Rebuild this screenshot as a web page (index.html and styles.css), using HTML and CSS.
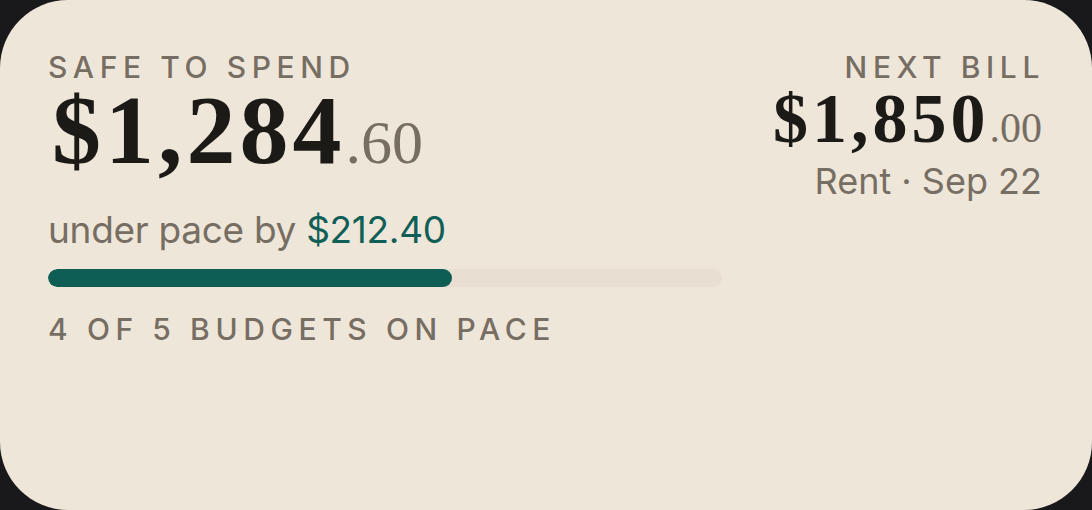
FILE: index.html
```html
<!DOCTYPE html>
<html lang="en">
<head>
    <meta charset="UTF-8">
    <meta name="viewport" content="width=device-width, initial-scale=1.0">
    <title>Budget Widget</title>
    <link rel="stylesheet" href="styles.css">
</head>
<body>

<div class="widget">
    <div class="spend">
        <div class="label">Safe to spend</div>
        <div class="amount amount-big">$1,284<span class="cents">.60</span></div>
        <div class="pace">under pace by <span class="pace-value">$212.40</span></div>
        <div class="bar">
            <div class="bar-fill" style="width: 60%;"></div>
        </div>
        <div class="label label-budgets">4 of 5 budgets on pace</div>
    </div>

    <div class="bill">
        <div class="label">Next bill</div>
        <div class="amount amount-small">$1,850<span class="cents">.00</span></div>
        <div class="bill-meta">Rent · Sep 22</div>
    </div>
</div>

</body>
</html>
```

FILE: styles.css
```css
body {
    margin: 0;
    padding: 0;
    background-color: #19191b;
    font-family: Inter, 'Noto Sans', sans-serif;
    color: #776e63;
}

.widget {
    width: 1092px;
    height: 510px;
    box-sizing: border-box;
    background-color: #efe6da;
    border-radius: 68px;
    padding: 52px 50px 0 48px;
    display: flex;
    justify-content: space-between;
}

.spend {
    width: 674px;
    display: flex;
    flex-direction: column;
}

.bill {
    text-align: right;
    display: flex;
    flex-direction: column;
    align-items: flex-end;
}

.label {
    font-size: 30px;
    line-height: 30px;
    font-weight: 500;
    letter-spacing: 5.6px;
    text-transform: uppercase;
    color: #776e63;
    margin-right: -5.6px;
}

.bill .label {
    margin-right: -3px;
}

.amount {
    font-family: 'Liberation Serif', 'Times New Roman', serif;
    font-weight: 700;
    color: #1b1a17;
    white-space: nowrap;
}

.amount-big {
    margin-top: -2px;
    padding-left: 4px;
    font-size: 98px;
    line-height: 100px;
    letter-spacing: 4px;
}

.amount-big .cents {
    font-size: 62px;
    font-weight: 400;
    letter-spacing: 0;
    color: #776e63;
}

.amount-small {
    margin-top: 1px;
    font-size: 70px;
    line-height: 72px;
    letter-spacing: 4px;
}

.amount-small .cents {
    font-size: 42px;
    font-weight: 400;
    letter-spacing: 0;
    color: #776e63;
}

.pace {
    margin-top: 18px;
    font-size: 37px;
    line-height: 40px;
    letter-spacing: -0.3px;
    color: #776e63;
}

.pace-value {
    color: #0f5f56;
}

.bar {
    margin-top: 19px;
    height: 18px;
    border-radius: 9px;
    background-color: #e8dfd2;
    overflow: hidden;
}

.bar-fill {
    height: 100%;
    border-radius: 9px;
    background-color: #0e5e55;
}

.label-budgets {
    margin-top: 27px;
}

.bill-meta {
    margin-top: -3px;
    font-size: 36px;
    line-height: 40px;
    color: #776e63;
}
```
